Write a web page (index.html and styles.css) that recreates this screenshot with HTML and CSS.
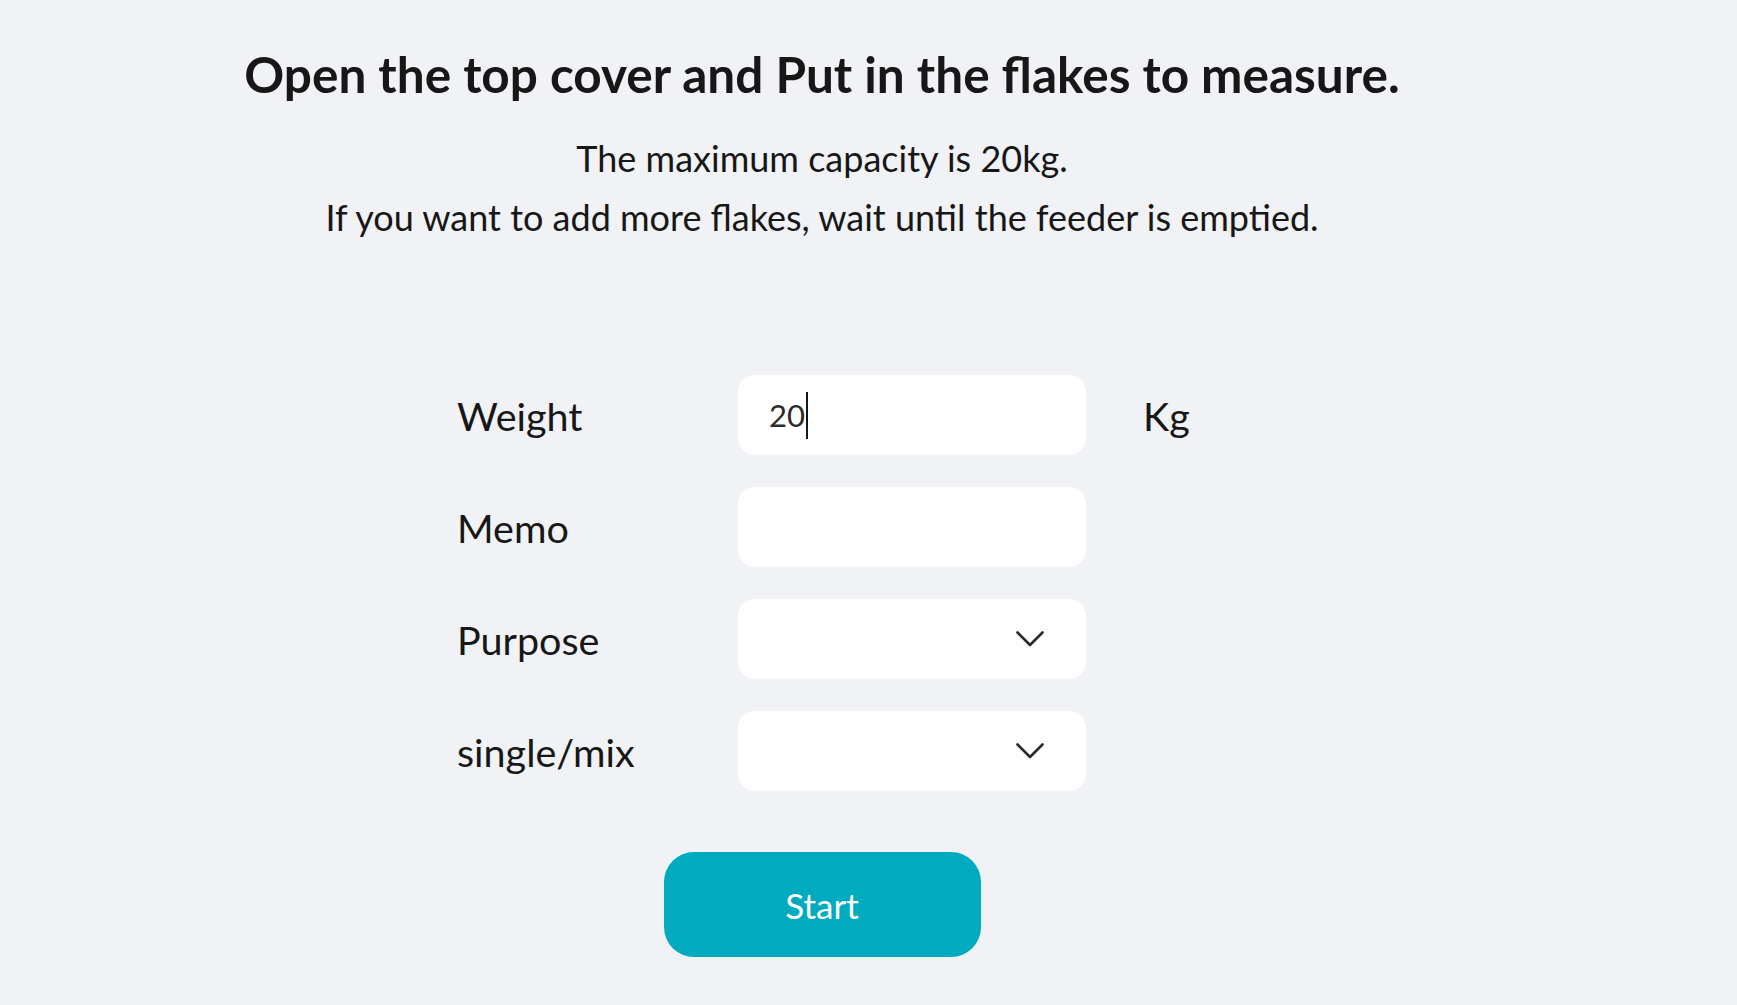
FILE: index.html
```html
<!DOCTYPE html>
<html lang="en">
<head>
<meta charset="utf-8">
<title>Measure flakes</title>
<link rel="stylesheet" href="styles.css">
</head>
<body>
<main class="page">
  <section class="intro">
    <h1 class="title">Open the top cover and Put in the flakes to measure.</h1>
    <p class="note">The maximum capacity is 20kg.</p>
    <p class="note">If you want to add more flakes, wait until the feeder is emptied.</p>
  </section>
  <form class="form">
    <label class="label">Weight</label>
    <div class="field"><span class="value">20</span><span class="caret"></span></div>
    <span class="unit">Kg</span>

    <label class="label">Memo</label>
    <div class="field"></div>
    <span class="unit"></span>

    <label class="label">Purpose</label>
    <div class="field select">
      <svg class="chev" viewBox="0 0 28 16" width="28" height="16"><path d="M1.5 1.5 L14 14 L26.5 1.5" fill="none" stroke="#2a2a2a" stroke-width="2.6" stroke-linecap="round" stroke-linejoin="round"/></svg>
    </div>
    <span class="unit"></span>

    <label class="label">single/mix</label>
    <div class="field select">
      <svg class="chev" viewBox="0 0 28 16" width="28" height="16"><path d="M1.5 1.5 L14 14 L26.5 1.5" fill="none" stroke="#2a2a2a" stroke-width="2.6" stroke-linecap="round" stroke-linejoin="round"/></svg>
    </div>
    <span class="unit"></span>
  </form>
  <div class="actions">
    <button class="start" type="button">Start</button>
  </div>
</main>
</body>
</html>
```
FILE: styles.css
```css
html, body {
  margin: 0;
  padding: 0;
  background: #f0f2f5;
}
body {
  font-family: Lato, "Noto Sans", sans-serif;
  color: #171717;
}
.page {
  width: 1644px;
  display: flex;
  flex-direction: column;
  align-items: center;
}
.intro {
  text-align: center;
  padding-top: 44px;
}
.title {
  margin: 0 0 25px;
  font-size: 49.5px;
  font-weight: 700;
  line-height: 60px;
}
.note {
  margin: 0;
  font-size: 36px;
  line-height: 59px;
}
.form {
  margin-top: 128px;
  display: grid;
  grid-template-columns: 281px 348px 101px;
  grid-auto-rows: 80px;
  row-gap: 32px;
  align-items: center;
}
.label {
  font-size: 39.5px;
}
.field {
  height: 80px;
  background: #ffffff;
  border-radius: 17px;
  display: flex;
  align-items: center;
  padding-left: 31px;
  box-sizing: border-box;
  font-size: 31px;
  color: #2b2b2b;
}
.caret {
  width: 2px;
  height: 47px;
  background: #171717;
  margin-left: 1px;
}
.select {
  justify-content: flex-end;
  padding-right: 42px;
}
.chev {
  display: block;
}
.unit {
  padding-left: 57px;
  font-size: 39.5px;
}
.actions {
  margin-top: 61px;
}
.start {
  width: 317px;
  height: 105px;
  border: none;
  border-radius: 30px;
  background: #00abc0;
  color: #ffffff;
  font-family: Lato, "Noto Sans", sans-serif;
  font-size: 35px;
  cursor: pointer;
}
```
